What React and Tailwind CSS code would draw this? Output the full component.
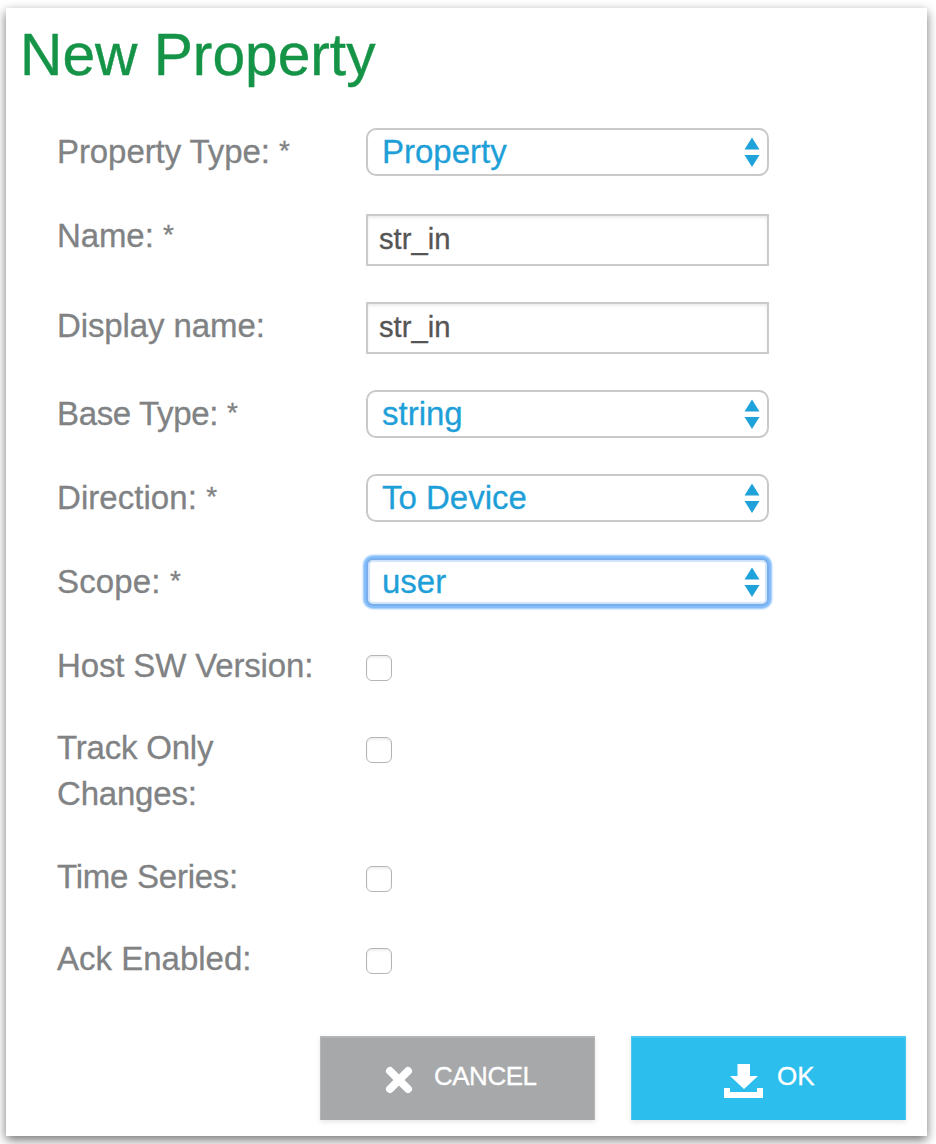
const fields = [
  { label: 'Property Type:', required: true, kind: 'select', value: 'Property', row: 'h-[84px]', tracking: 'tracking-[-0.08px]' },
  { label: 'Name:', required: true, kind: 'text', value: 'str_in', row: 'h-[90px]', pad: 'pt-[2px]', tracking: 'tracking-[-0.1px]' },
  { label: 'Display name:', kind: 'text', value: 'str_in', row: 'h-[88px]', tracking: 'tracking-[-0.1px]' },
  { label: 'Base Type:', required: true, kind: 'select', value: 'string', row: 'h-[84px]', tracking: 'tracking-[-0.35px]' },
  { label: 'Direction:', required: true, kind: 'select', value: 'To Device', row: 'h-[84px]', tracking: 'tracking-[0.05px]' },
  { label: 'Scope:', required: true, kind: 'select', value: 'user', row: 'h-[84px]', focused: true, tracking: 'tracking-[0.15px]' },
  { label: 'Host SW Version:', kind: 'check', row: 'h-[82px]', tracking: 'tracking-[-0.15px]' },
  { label: 'Track Only Changes:', kind: 'check', row: 'h-[129px]', tracking: 'tracking-[-0.2px]' },
  { label: 'Time Series:', kind: 'check', row: 'h-[82px]', tracking: 'tracking-[-0.25px]' },
  { label: 'Ack Enabled:', kind: 'check', row: 'h-[101px]', tracking: 'tracking-normal' },
];

function Select({ value, focused }) {
  const ring = focused
    ? 'rounded-[7px] border-[#78aeeb] shadow-[0_0_0_2px_#86befb,0_0_2px_3px_#8fc3fb,inset_0_0_1px_2px_#cfe4fb]'
    : 'rounded-[10px] border-[#c9c9c9]';
  return (
    <div
      role="combobox"
      aria-expanded="false"
      className={`flex h-12 w-[403px] items-center justify-between border-2 bg-white pr-[7px] pl-[14px] text-[33px] leading-[44px] text-[#1f9fd8] [-webkit-text-stroke:0.3px_#1f9fd8] ${ring}`}
    >
      <span>{value}</span>
      <svg width="16" height="30" viewBox="0 0 16 30" fill="#1fa2da" aria-hidden="true">
        <path d="M8 0.5 15.5 12.5H0.5Z" />
        <path d="M0.5 18H15.5L8 30Z" />
      </svg>
    </div>
  );
}

function TextInput({ value, pad = '' }) {
  return (
    <div className={pad}>
      <input
        type="text"
        defaultValue={value}
        className="block h-[52px] w-[403px] border-2 border-[#cbcbcb] bg-white pb-[2px] pl-[11px] text-[29.2px] text-[#555555] shadow-[inset_0_2px_3px_#ececec] outline-none [-webkit-text-stroke:0.3px_#555555]"
      />
    </div>
  );
}

function Checkbox({ label }) {
  return (
    <div className="pt-[13px]">
      <input
        type="checkbox"
        aria-label={label}
        className="block size-[26px] appearance-none rounded-[6px] border-[1.5px] border-[#b5b5b5] bg-white shadow-[inset_0_2px_2px_#f0f0f0]"
      />
    </div>
  );
}

export default function App() {
  return (
    <div className="h-[1144px] w-[936px] overflow-hidden bg-white pt-2 pl-[6px] font-['Liberation_Sans',Arial,sans-serif]">
      <div className="flex h-[1128px] w-[921px] flex-col bg-white shadow-[0_4px_10px_rgba(0,0,0,0.55)]">
        <h1 className="h-[120px] pt-[12px] pl-[14px] text-[58.7px] leading-[70px] text-[#159447] [-webkit-text-stroke:0.4px_#159447]">New Property</h1>
        <div className="flex flex-col pl-[51px]">
          {fields.map((f) => (
            <div key={f.label} className={`flex items-start ${f.row}`}>
              <label className={`w-[309px] pt-px pr-[40px] text-[33px] leading-[46px] text-[#808284] [-webkit-text-stroke:0.3px_#808284] ${f.tracking}`}>
                {f.label}
                {f.required && <span className="ml-[1.5px] align-[3px] text-[28px] leading-none"> *</span>}
              </label>
              {f.kind === 'select' && <Select value={f.value} focused={f.focused} />}
              {f.kind === 'text' && <TextInput value={f.value} pad={f.pad} />}
              {f.kind === 'check' && <Checkbox label={f.label} />}
            </div>
          ))}
        </div>
        <div className="flex gap-9 pl-[314px]">
          <button className="flex h-[84px] w-[275px] items-start border border-t-2 border-[#b4b5b7] border-b-[#a7a8aa] bg-[#a7a8aa] pt-[22px] pl-[64px] text-[26px] leading-[32px] tracking-[-0.5px] text-white shadow-[0_2px_5px_rgba(0,0,0,0.1)] [-webkit-text-stroke:0.3px_#fff]">
            <svg className="mt-[6px] mr-[21px]" width="28" height="28" viewBox="0 0 28 28" fill="none" stroke="#fff" strokeWidth="8" strokeLinecap="round" aria-hidden="true">
              <path d="M5 5 23 23M23 5 5 23" />
            </svg>
            CANCEL
          </button>
          <button className="flex h-[84px] w-[275px] items-start border border-t-2 border-[#4bc8f1] border-b-[#2cbfee] bg-[#2cbfee] pt-[22px] pl-[92px] text-[26px] leading-[32px] text-white shadow-[0_2px_5px_rgba(0,0,0,0.1)] [-webkit-text-stroke:0.3px_#fff]">
            <svg className="mt-[4px] mr-[14px]" width="39" height="34" viewBox="0 0 39 34" fill="#fff" aria-hidden="true">
              <path d="M13.5 0H26V12H34L20 25 6 12H13.5Z" />
              <path d="M0 24H6V28H33V24H39V34H0Z" />
            </svg>
            OK
          </button>
        </div>
      </div>
    </div>
  );
}
